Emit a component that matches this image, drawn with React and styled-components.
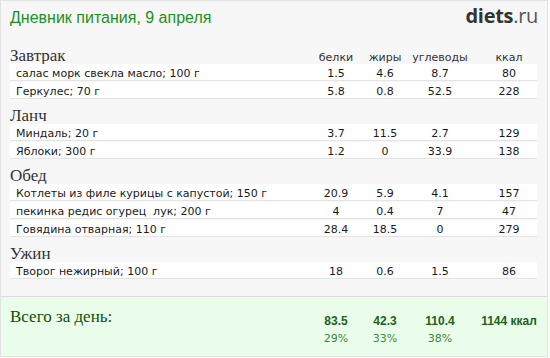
import React from "react";
import styled, { createGlobalStyle } from "styled-components";

const Global = createGlobalStyle`
  html, body { margin: 0; padding: 0; background: #ffffff; }
  body { font-family: "DejaVu Sans", Verdana, sans-serif; }
`;

const Panel = styled.div`
  width: 546px;
  border: 1px solid #e2e2e2;
  background: #f7f7f7;
  display: flex;
  flex-direction: column;
`;

const Header = styled.div`
  display: flex;
  justify-content: space-between;
  align-items: baseline;
  padding: 5px 9px 0 9px;
  height: 20px;
`;

const Title = styled.h1`
  margin: 0;
  font-family: "Liberation Sans", Arial, sans-serif;
  font-weight: normal;
  font-size: 16px;
  line-height: 20px;
  color: #1f8f1f;
`;

const Logo = styled.div`
  font-family: "Open Sans", "Liberation Sans", sans-serif;
  font-size: 20px;
  line-height: 20px;
  color: #333;
  letter-spacing: -0.3px;
  b { font-weight: 700; }
  span { font-weight: 400; color: #555; }
`;

const Meals = styled.div`
  display: flex;
  flex-direction: column;
  gap: 6px;
  padding: 20px 10px 16px 9px;
`;

const Group = styled.section`
  display: flex;
  flex-direction: column;
`;

const cols = "1fr 50px 48px 62px 66px";

const HeadRow = styled.div`
  display: grid;
  grid-template-columns: ${cols};
  align-items: baseline;
  height: 18px;
`;

const MealName = styled.div`
  font-family: "Liberation Serif", "Times New Roman", serif;
  font-size: 17px;
  line-height: 18px;
  color: #333;
  padding-top: 1px;
`;

const ColHead = styled.div`
  font-size: 11px;
  line-height: 13px;
  color: #333;
  text-align: center;
  padding-left: ${(p) => (p.$kcal ? "10px" : "0")};
`;

const Row = styled.div`
  display: grid;
  grid-template-columns: ${cols};
  background: #ffffff;
  border-bottom: 1px solid #e4e4e4;
  margin-bottom: 1px;
  height: 13px;
  padding-top: 3px;
  font-size: 11px;
  line-height: 13px;
  color: #1a1a1a;
`;

const Food = styled.div`
  padding-left: 6px;
  white-space: pre;
  overflow: hidden;
`;

const Num = styled.div`
  text-align: center;
  padding-left: ${(p) => (p.$kcal ? "10px" : "0")};
`;

const Totals = styled.div`
  display: grid;
  grid-template-columns: ${cols};
  border-top: 1px solid #dcdcdc;
  background: #eafdea;
  padding: 15px 10px 8px 9px;
`;

const TotalLabel = styled.div`
  font-family: "Liberation Serif", "Times New Roman", serif;
  font-size: 17px;
  line-height: 18px;
  color: #0c500c;
  margin-top: -4px;
`;

const TotalCell = styled.div`
  display: flex;
  flex-direction: column;
  align-items: center;
  padding-left: ${(p) => (p.$kcal ? "10px" : "0")};
`;

const TotalNum = styled.div`
  font-family: "Liberation Sans", Arial, sans-serif;
  font-weight: bold;
  font-size: 12px;
  line-height: 18px;
  color: #1c621c;
  white-space: nowrap;
`;

const Pct = styled.div`
  font-size: 11px;
  line-height: 18px;
  color: #3b8a3b;
`;

const meals = [
  {
    name: "Завтрак",
    head: true,
    items: [
      ["салас морк свекла масло; 100 г", "1.5", "4.6", "8.7", "80"],
      ["Геркулес; 70 г", "5.8", "0.8", "52.5", "228"],
    ],
  },
  {
    name: "Ланч",
    items: [
      ["Миндаль; 20 г", "3.7", "11.5", "2.7", "129"],
      ["Яблоки; 300 г", "1.2", "0", "33.9", "138"],
    ],
  },
  {
    name: "Обед",
    items: [
      ["Котлеты из филе курицы с капустой; 150 г", "20.9", "5.9", "4.1", "157"],
      ["пекинка редис огурец  лук; 200 г", "4", "0.4", "7", "47"],
      ["Говядина отварная; 110 г", "28.4", "18.5", "0", "279"],
    ],
  },
  {
    name: "Ужин",
    items: [["Творог нежирный; 100 г", "18", "0.6", "1.5", "86"]],
  },
];

export default function App() {
  return (
    <>
      <Global />
      <Panel>
        <Header>
          <Title>Дневник питания, 9 апреля</Title>
          <Logo>
            <b>diets</b>
            <span>.ru</span>
          </Logo>
        </Header>
        <Meals>
          {meals.map((m) => (
            <Group key={m.name}>
              <HeadRow>
                <MealName>{m.name}</MealName>
                {m.head && (
                  <>
                    <ColHead>белки</ColHead>
                    <ColHead>жиры</ColHead>
                    <ColHead>углеводы</ColHead>
                    <ColHead $kcal>ккал</ColHead>
                  </>
                )}
              </HeadRow>
              {m.items.map((it) => (
                <Row key={it[0]}>
                  <Food>{it[0]}</Food>
                  <Num>{it[1]}</Num>
                  <Num>{it[2]}</Num>
                  <Num>{it[3]}</Num>
                  <Num $kcal>{it[4]}</Num>
                </Row>
              ))}
            </Group>
          ))}
        </Meals>
        <Totals>
          <TotalLabel>Всего за день:</TotalLabel>
          <TotalCell>
            <TotalNum>83.5</TotalNum>
            <Pct>29%</Pct>
          </TotalCell>
          <TotalCell>
            <TotalNum>42.3</TotalNum>
            <Pct>33%</Pct>
          </TotalCell>
          <TotalCell>
            <TotalNum>110.4</TotalNum>
            <Pct>38%</Pct>
          </TotalCell>
          <TotalCell $kcal>
            <TotalNum>1144 ккал</TotalNum>
          </TotalCell>
        </Totals>
      </Panel>
    </>
  );
}
